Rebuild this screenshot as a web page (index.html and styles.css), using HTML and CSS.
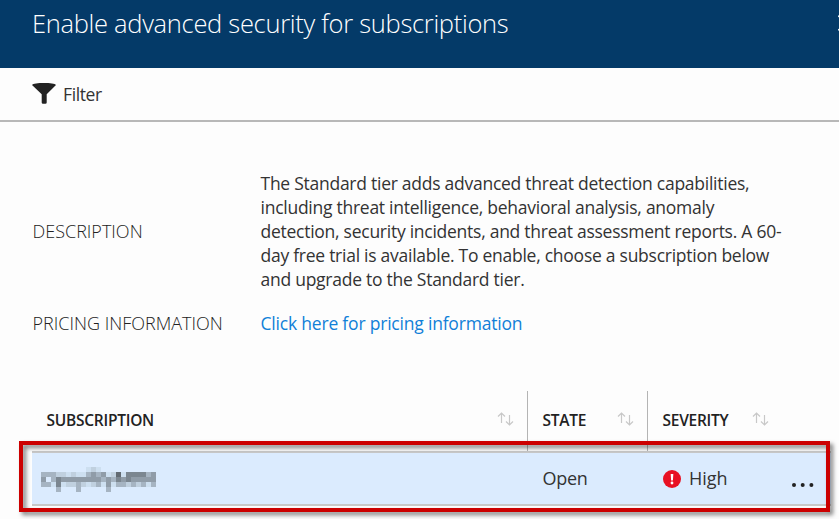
FILE: index.html
```html
<!DOCTYPE html>
<html lang="en">
<head>
<meta charset="utf-8">
<title>Enable advanced security for subscriptions</title>
<link rel="stylesheet" href="styles.css">
</head>
<body>
<header class="blade-header">
  <h1 class="title">Enable advanced security for subscriptions</h1>
  <svg class="close" width="16" height="16" viewBox="0 0 16 16"><path d="M.5.5l15 15M15.500.500l-15 15"/></svg>
</header>
<div class="toolbar">
  <svg class="funnel" width="24" height="21" viewBox="0 0 24 21"><path d="M0 2C1 .6 6 0 12 0s11 .6 12 2l-9.300 9.300V19.500q0 1.300-1.300 1.300h-2.400q-1.300 0-1.300-1.300V11.300z"/></svg>
  <span class="filter">Filter</span>
</div>
<main>
  <dl class="details">
    <dt class="label">DESCRIPTION</dt>
    <dd class="text">
      <span>The Standard tier adds advanced threat detection capabilities,</span>
      <span>including threat intelligence, behavioral analysis, anomaly</span>
      <span>detection, security incidents, and threat assessment reports. A 60-</span>
      <span>day free trial is available. To enable, choose a subscription below</span>
      <span>and upgrade to the Standard tier.</span>
    </dd>
    <dt class="label">PRICING INFORMATION</dt>
    <dd class="text"><a class="link">Click here for pricing information</a></dd>
  </dl>
  <div class="grid">
    <div class="row head">
      <div class="cell"><span>SUBSCRIPTION</span><svg class="sort" width="17" height="14" viewBox="0 0 17 14"><path d="M4.500 11V1M1 4.500L4.500 1 8 4.500M12.500 3v10M9 9.500l3.500 3.500L16 9.500"/></svg></div>
      <div class="cell"><span>STATE</span><svg class="sort" width="17" height="14" viewBox="0 0 17 14"><path d="M4.500 11V1M1 4.500L4.500 1 8 4.500M12.500 3v10M9 9.500l3.500 3.500L16 9.500"/></svg></div>
      <div class="cell last"><span>SEVERITY</span><svg class="sort" width="17" height="14" viewBox="0 0 17 14"><path d="M4.500 11V1M1 4.500L4.500 1 8 4.500M12.500 3v10M9 9.500l3.500 3.500L16 9.500"/></svg></div>
    </div>
    <div class="row body">
      <div class="cell">
        <svg class="mosaic" width="115" height="25" viewBox="0 0 23 5" shape-rendering="crispEdges">
          <path fill="#cddff0" d="M9 0h1v1h-1zM11 0h1v1h-1zM8 1h1v1h-1zM5 1h1v1h-1zM7 1h1v1h-1zM13 1h1v1h-1zM16 1h1v1h-1zM2 3h1v1h-1zM4 3h1v1h-1zM9 3h1v1h-1zM12 3h1v1h-1zM14 3h1v1h-1zM21 3h1v1h-1z"/>
          <path fill="#c0d0df" d="M10 0h1v1h-1zM3 1h2v1h-2zM6 1h1v1h-1zM14 1h1v1h-1zM5 3h2v1h-2zM8 3h1v1h-1zM10 3h1v1h-1zM17 3h1v1h-1zM19 3h1v1h-1z"/>
          <path fill="#a6b4c2" d="M0 1h3v1h-3zM9 1h1v1h-1zM11 1h1v1h-1zM21 1h1v1h-1zM2 2h1v1h-1zM8 2h1v1h-1zM12 2h1v1h-1zM14 2h1v1h-1zM0 3h2v1h-2zM7 3h1v1h-1zM11 3h1v1h-1zM15 3h2v1h-2zM18 3h1v1h-1zM20 3h1v1h-1zM22 3h1v1h-1zM3 4h1v1h-1zM7 4h1v1h-1zM13 4h1v1h-1z"/>
          <path fill="#909ca8" d="M10 1h1v1h-1zM12 1h1v1h-1zM22 1h1v1h-1zM0 2h1v1h-1zM3 2h8v1h-8zM11 2h1v1h-1zM13 2h1v1h-1zM16 2h1v1h-1zM18 2h5v1h-5zM13 3h1v1h-1z"/>
          <path fill="#7b8690" d="M17 1h4v1h-4zM3 2h1v1h-1zM15 2h1v1h-1zM17 2h1v1h-1zM3 3h1v1h-1z"/>
          <path fill="#626a72" d="M15 1h1v1h-1z"/>
        </svg>
      </div>
      <div class="cell"><span>Open</span></div>
      <div class="cell last">
        <svg class="alert" width="18" height="18" viewBox="0 0 18 18"><circle cx="9" cy="9" r="9" fill="#e81123"/><path d="M7.700 4h2.600l-.4 6.500h-1.800z" fill="#fff"/><circle cx="9" cy="13" r="1.400" fill="#fff"/></svg>
        <span class="high">High</span>
        <svg class="more" width="22" height="4" viewBox="0 0 22 4"><circle cx="2" cy="2" r="2"/><circle cx="10.700" cy="2" r="2"/><circle cx="19.400" cy="2" r="2"/></svg>
      </div>
    </div>
    <div class="highlight"></div>
  </div>
</main>
</body>
</html>
```
FILE: styles.css
```css
* { box-sizing: border-box; }
body {
  margin: 0;
  height: 519px;
  overflow: hidden;
  background: #fdfdfd;
  color: #333;
  font: 17.5px/24px "Open Sans", "Noto Sans", sans-serif;
  letter-spacing: -0.26px;
}
.blade-header {
  display: flex;
  height: 68px;
  padding-left: 32px;
  background: #043a68;
  color: #fff;
  overflow: hidden;
}
.title {
  flex: none;
  width: 806px;
  margin: 5px 0 0;
  font-size: 25.5px;
  line-height: 36px;
  font-weight: 300;
  letter-spacing: -0.3px;
  white-space: nowrap;
}
.close {
  flex: none;
  margin-top: 15px;
  fill: none;
  stroke: #fff;
  stroke-width: 2;
}
.toolbar {
  display: flex;
  height: 54px;
  padding-left: 32px;
  border-bottom: 2px solid #b8b8b8;
}
.funnel { margin-top: 15px; fill: #222; }
.filter { margin: 14px 0 0 7px; letter-spacing: -0.4px; }
.details {
  display: grid;
  grid-template-columns: 228px 540px;
  row-gap: 20px;
  align-items: center;
  margin: 49px 0 0 32.500px;
}
.text { margin: 0; }
.text span { display: block; white-space: nowrap; }
.label {
  font-size: 18px;
  font-weight: 300;
  letter-spacing: 0;
  color: #222;
  white-space: nowrap;
}
.link { color: #1080d8; letter-spacing: -0.2px; }
.grid {
  position: relative;
  width: 799px;
  margin: 56px 0 0 32px;
}
.row { display: grid; grid-template-columns: 496px 120px 183px; }
.head { height: 60px; }
.head .cell {
  display: flex;
  justify-content: space-between;
  padding: 17px 13px 0 14.500px;
  border-right: 1px solid #b4b4b4;
  color: #222;
  font-size: 15.5px;
  font-weight: 600;
}
.head .cell.last { padding-right: 62px; border: 0; }
.sort { margin-top: 4px; fill: none; stroke: #c8c8c8; stroke-width: 1.2; }
.body {
  height: 55px;
  background: #dbebfe;
  border: solid #c8c8c8;
  border-width: 2px 0;
}
.body .cell {
  display: flex;
  align-items: center;
  padding-left: 14.500px;
  font-size: 18px;
}
.body .cell span { margin-top: -2px; }
.body .cell:first-child { padding-left: 9px; }
.body .cell.last { padding-left: 15px; letter-spacing: 0; }
.mosaic { margin-top: 2px; }
.high { width: 40px; margin-left: 8px; }
.more { margin: 13px 0 0 63px; fill: #222; }
.highlight {
  position: absolute;
  left: -13px;
  top: 50px;
  width: 811px;
  height: 71px;
  border: 4px solid #c00;
  filter: drop-shadow(3px 3px 2px rgba(0, 0, 0, .5));
}
```
